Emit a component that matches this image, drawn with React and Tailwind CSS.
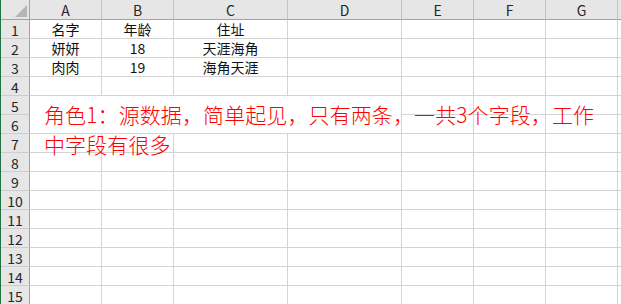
import React from 'react';

const cols = [
    { label: 'A', w: 'w-[72px]' },
    { label: 'B', w: 'w-[72px]' },
    { label: 'C', w: 'w-[114px]' },
    { label: 'D', w: 'w-[114px]' },
    { label: 'E', w: 'w-[72px]' },
    { label: 'F', w: 'w-[72px]' },
    { label: 'G', w: 'w-[72px]' },
    { label: '', w: 'w-[72px]' },
];

const data = {
    1: ['名字', '年龄', '住址'],
    2: ['妍妍', '18', '天涯海角'],
    3: ['肉肉', '19', '海角天涯'],
};

const font = { fontFamily: '"Microsoft YaHei", "Noto Sans CJK SC", "Liberation Sans", sans-serif' };

function RowHead({ n }) {
    return (
        <div className="w-[29px] h-[19px] shrink-0 bg-[#e6e6e6] border-r border-b border-r-[#a3a3a3] border-b-[#cdcdcd] flex items-center justify-center text-[14px] text-[#262626] leading-none pt-[1px]">
            {n}
        </div>
    );
}

function Cell({ w, children }) {
    return (
        <div className={`${w} h-[19px] shrink-0 border-r border-b border-[#d4d4d4] flex items-center justify-center text-[14px] text-[#111] leading-none`}>
            {children}
        </div>
    );
}

function Row({ n }) {
    const vals = data[n] || [];
    return (
        <div className="flex">
            <RowHead n={n} />
            {cols.map((c, i) => (
                <Cell key={i} w={c.w}>{vals[i]}</Cell>
            ))}
        </div>
    );
}

export default function App() {
    return (
        <div className="relative w-[621px] h-[304px] overflow-hidden bg-white flex" style={font}>
            <div className="w-[1px] shrink-0 bg-[#217346]"></div>
            <div className="flex flex-col">
                {/* column header */}
                <div className="flex h-[20px]">
                    <div className="w-[29px] h-[20px] shrink-0 bg-[#e6e6e6] border-r border-b border-[#a3a3a3] relative">
                        <svg width="12" height="12" viewBox="0 0 12 12" className="absolute right-[2px] bottom-[2px]">
                            <polygon points="12,0 12,12 0,12" fill="#b5b5b5" />
                        </svg>
                    </div>
                    {cols.map((c, i) => (
                        <div
                            key={i}
                            className={`${c.w} h-[20px] shrink-0 bg-[#e6e6e6] border-r border-b border-r-[#c3c3c3] border-b-[#a3a3a3] flex items-center justify-center text-[14px] text-[#262626] leading-none pt-[1px]`}
                        >
                            {c.label}
                        </div>
                    ))}
                </div>

                {[1, 2, 3, 4].map((n) => (
                    <Row key={n} n={n} />
                ))}

                {/* rows 5-6: A:D merged */}
                <div className="flex">
                    <div className="flex flex-col">
                        <RowHead n={5} />
                        <RowHead n={6} />
                    </div>
                    <div className="w-[372px] h-[38px] shrink-0 border-r border-b border-[#d4d4d4]"></div>
                    <div className="flex flex-col">
                        {[5, 6].map((n) => (
                            <div key={n} className="flex">
                                {cols.slice(4).map((c, i) => (
                                    <Cell key={i} w={c.w} />
                                ))}
                            </div>
                        ))}
                    </div>
                </div>

                {[7, 8, 9, 10, 11, 12, 13, 14, 15].map((n) => (
                    <Row key={n} n={n} />
                ))}
            </div>

            <div
                className="absolute left-[44px] top-[99px] text-[21px] leading-[30px] font-light text-[#ff0000] whitespace-nowrap tracking-[0.1px]"
                style={{ fontFamily: '"Noto Sans CJK SC", "Liberation Sans", sans-serif' }}
            >
                角色1：源数据，简单起见，只有两条，一共3个字段，工作
                <br />
                中字段有很多
            </div>
        </div>
    );
}
